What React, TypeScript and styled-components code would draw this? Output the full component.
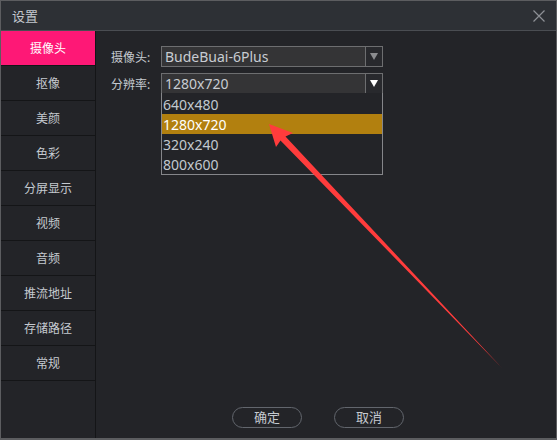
import React from "react";
import styled, { createGlobalStyle } from "styled-components";

const GlobalStyle = createGlobalStyle`
  html, body {
    margin: 0;
    padding: 0;
    background: #232428;
  }
  * {
    box-sizing: border-box;
  }
`;

const fontStack = `"Noto Sans", "Noto Sans CJK SC", sans-serif`;

export const Window = styled.div`
  position: relative;
  width: 557px;
  height: 440px;
  display: flex;
  flex-direction: column;
  border: 1px solid #5c5d60;
  border-bottom-width: 2px;
  background: #232428;
  font-family: ${fontStack};
  overflow: hidden;
`;

export const TitleBar = styled.div`
  height: 30px;
  flex: none;
  display: flex;
  align-items: center;
  justify-content: space-between;
  padding: 0 10px 0 11px;
  background: #2d3035;
  border-bottom: 1px solid #4a4d52;
  color: #c4c8ce;
  font-size: 13px;
`;

export const CloseButton = styled.svg`
  width: 12px;
  height: 12px;
  margin-right: 1px;
`;

export const Body = styled.div`
  flex: 1;
  display: flex;
  min-height: 0;
`;

export const Sidebar = styled.div`
  width: 95px;
  flex: none;
  display: flex;
  flex-direction: column;
  border-right: 1px solid #141517;
`;

export const SideItem = styled.div<{ $active?: boolean }>`
  height: 35px;
  display: flex;
  align-items: center;
  justify-content: center;
  border-bottom: 1px solid #141517;
  background: ${(p) => (p.$active ? "#fe1876" : "#232428")};
  color: ${(p) => (p.$active ? "#ffffff" : "#c5cad0")};
  font-size: 12px;
`;

export const Content = styled.div`
  flex: 1;
  display: flex;
  flex-direction: column;
  padding: 15px 0 10px 15px;
`;

export const Form = styled.div`
  flex: 1;
  display: flex;
  flex-direction: column;
  gap: 6px;
`;

export const Row = styled.div`
  display: flex;
  align-items: center;
`;

export const Label = styled.span`
  width: 50px;
  color: #c5cad0;
  font-size: 12px;
`;

export const Select = styled.div`
  position: relative;
  width: 222px;
  height: 21px;
  display: flex;
  border: 1px solid #6d6e70;
`;

export const SelectValue = styled.div`
  flex: 1;
  display: flex;
  align-items: center;
  padding-left: 3px;
  background: #343436;
  border-right: 1px solid #6d6e70;
  color: #c8ccd2;
  font-size: 14px;
`;

export const SelectArrow = styled.div`
  width: 16px;
  display: flex;
  align-items: center;
  justify-content: center;
  background: #28292d;
`;

export const Triangle = styled.div<{ $open?: boolean }>`
  width: 0;
  height: 0;
  border-left: 4px solid transparent;
  border-right: 4px solid transparent;
  border-top: 7px solid ${(p) => (p.$open ? "#ffffff" : "#8c8d90")};
`;

export const Dropdown = styled.div`
  position: absolute;
  left: -1px;
  top: 100%;
  width: 222px;
  border: 1px solid #85868a;
  border-top: none;
  background: #232428;
  padding-top: 1px;
  z-index: 2;
`;

export const Option = styled.div<{ $selected?: boolean }>`
  height: 20px;
  display: flex;
  align-items: center;
  padding-left: 1px;
  background: ${(p) => (p.$selected ? "#b2800f" : "transparent")};
  color: ${(p) => (p.$selected ? "#ffffff" : "#c2c9d0")};
  font-size: 14px;
`;

export const Footer = styled.div`
  display: flex;
  justify-content: center;
  gap: 32px;
  padding-right: 31px;
`;

export const PillButton = styled.button`
  width: 70px;
  height: 21px;
  border: 1px solid #62666d;
  border-radius: 11px;
  background: transparent;
  color: #c5cad0;
  font-family: ${fontStack};
  font-size: 13px;
  line-height: 1;
  padding: 0;
`;

export const Annotation = styled.svg`
  position: absolute;
  left: -1px;
  top: -1px;
  width: 557px;
  height: 440px;
  pointer-events: none;
  z-index: 5;
`;

const navItems = [
  "摄像头",
  "抠像",
  "美颜",
  "色彩",
  "分屏显示",
  "视频",
  "音频",
  "推流地址",
  "存储路径",
  "常规",
];

const resolutions = ["640x480", "1280x720", "320x240", "800x600"];

const App = () => {
  return (
    <>
      <GlobalStyle />
      <Window>
        <TitleBar>
          <span>设置</span>
          <CloseButton viewBox="0 0 12 12">
            <path d="M0.5 0.5 L11.5 11.5 M11.5 0.5 L0.5 11.5" stroke="#8d9096" strokeWidth="1.2" />
          </CloseButton>
        </TitleBar>
        <Body>
          <Sidebar>
            {navItems.map((item, i) => (
              <SideItem key={item} $active={i === 0}>
                {item}
              </SideItem>
            ))}
          </Sidebar>
          <Content>
            <Form>
              <Row>
                <Label>摄像头:</Label>
                <Select>
                  <SelectValue>BudeBuai-6Plus</SelectValue>
                  <SelectArrow>
                    <Triangle />
                  </SelectArrow>
                </Select>
              </Row>
              <Row>
                <Label>分辨率:</Label>
                <Select>
                  <SelectValue>1280x720</SelectValue>
                  <SelectArrow>
                    <Triangle $open />
                  </SelectArrow>
                  <Dropdown>
                    {resolutions.map((r) => (
                      <Option key={r} $selected={r === "1280x720"}>
                        {r}
                      </Option>
                    ))}
                  </Dropdown>
                </Select>
              </Row>
            </Form>
            <Footer>
              <PillButton>确定</PillButton>
              <PillButton>取消</PillButton>
            </Footer>
          </Content>
        </Body>
        <Annotation viewBox="0 0 557 440">
          <polygon
            points="269,124 293,133 285.5,136.5 502,368 280.5,140.5 276,147"
            fill="#ff3c3c"
          />
        </Annotation>
      </Window>
    </>
  );
};

export default App;
